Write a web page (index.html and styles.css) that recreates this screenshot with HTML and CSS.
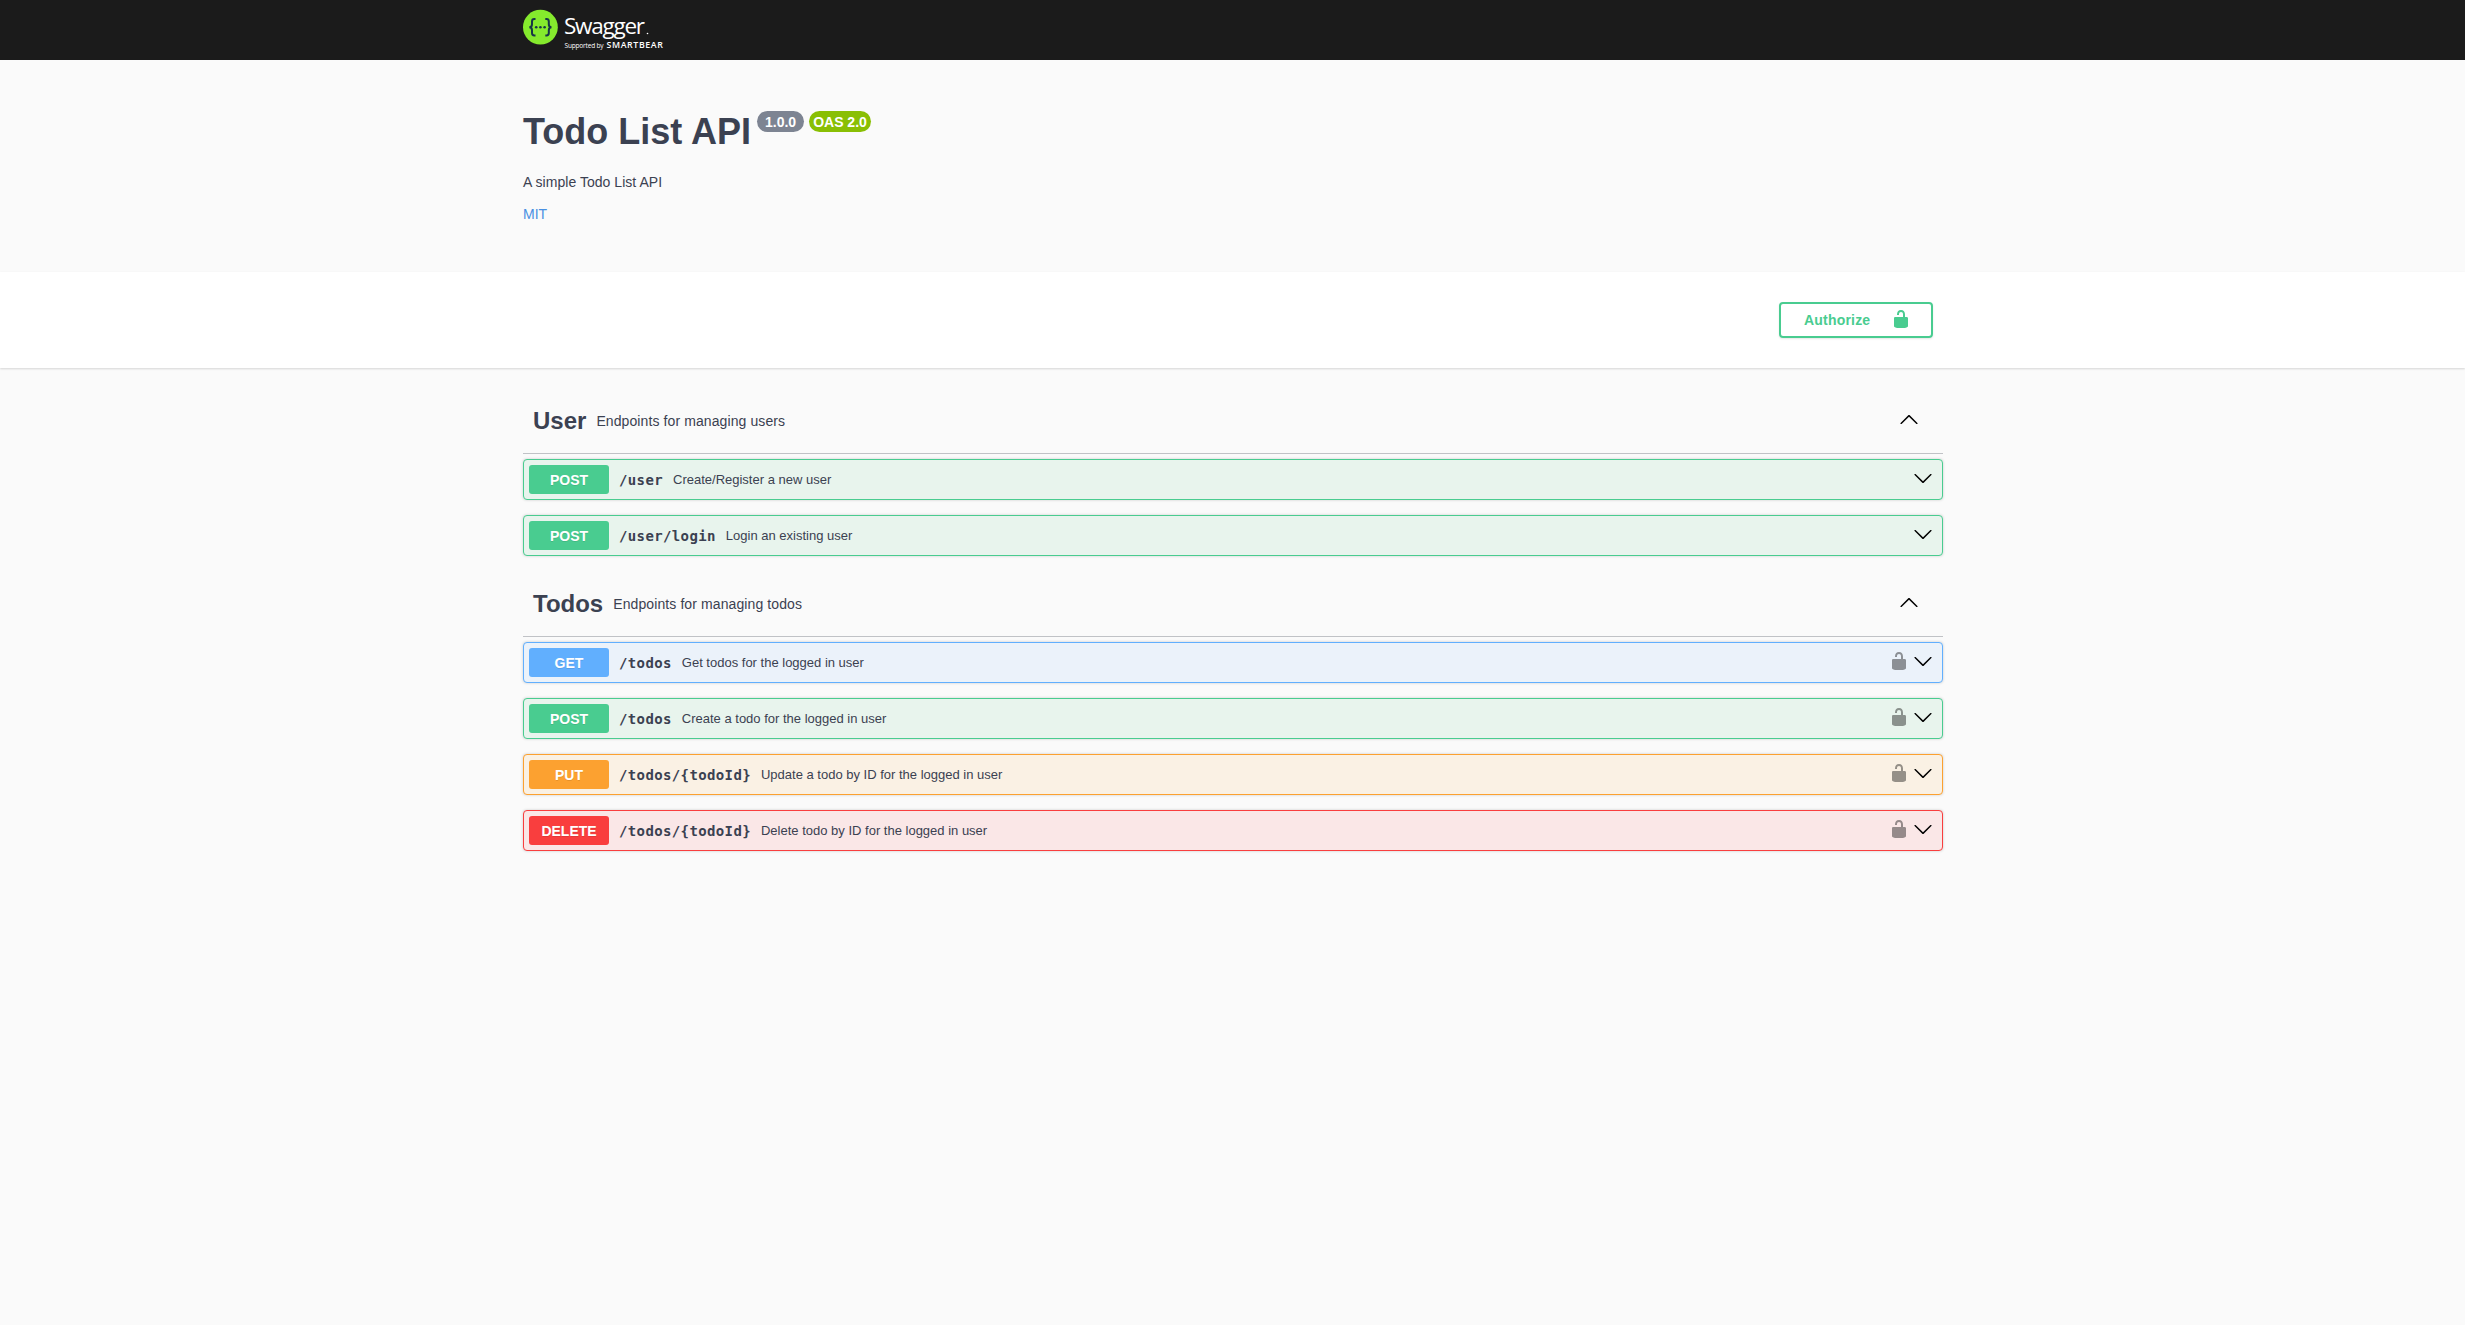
FILE: index.html
```html
<!DOCTYPE html>
<html lang="en">
<head>
<meta charset="utf-8">
<title>Todo List API</title>
<link rel="stylesheet" href="styles.css">
</head>
<body>
<svg class="symbols" aria-hidden="true">
  <symbol id="arrow-down" viewBox="0 0 20 20"><path d="M17.418 6.109c.272-.268.709-.268.979 0s.271.701 0 .969l-7.908 7.83c-.27.268-.707.268-.979 0l-7.908-7.83c-.27-.268-.271-.701 0-.969.271-.268.709-.268.979 0L10 13.25l7.418-7.141z"/></symbol>
  <symbol id="arrow-up" viewBox="0 0 20 20"><path d="M17.418 14.908c.272.268.709.268.979 0s.271-.701 0-.969l-7.908-7.83c-.27-.268-.707-.268-.979 0l-7.908 7.83c-.27.268-.271.701 0 .969.271.268.709.268.979 0L10 7.767l7.418 7.141z"/></symbol>
  <symbol id="unlocked" viewBox="0 0 20 20"><path d="M15.8 8H14V5.6C14 2.703 12.665 1 10 1 7.334 1 6 2.703 6 5.6V6h2v-.801C8 3.754 8.797 3 10 3c1.203 0 2 .754 2 2.199V8H4c-.553 0-1 .646-1 1.199V17c0 .549.428 1.139.951 1.307l1.197.387C5.672 18.861 6.55 19 7.1 19h5.8c.549 0 1.428-.139 1.951-.307l1.196-.387c.524-.167.953-.757.953-1.306V9.199C17 8.646 16.352 8 15.8 8z"/></symbol>
</svg>

<header class="topbar">
  <div class="wrapper">
    <svg class="logo" width="150" height="60" viewBox="0 0 150 60">
      <circle cx="17.4" cy="27.2" r="17.4" fill="#85ea2d"/>
      <g fill="none" stroke="#173647" stroke-width="2">
        <path d="M12.500 19h-1.200q-2.300 0-2.300 2.400v2.800q0 3-2.700 3q2.700 0 2.700 3V33q0 2.400 2.300 2.400h1.200"/>
        <path d="M22.300 19h1.200q2.300 0 2.300 2.400v2.800q0 3 2.700 3q-2.700 0-2.700 3V33q0 2.400-2.300 2.400h-1.200"/>
      </g>
      <g fill="#173647"><circle cx="13.200" cy="27.200" r="1.300"/><circle cx="17.400" cy="27.200" r="1.300"/><circle cx="21.600" cy="27.200" r="1.300"/></g>
      <text class="logo-name" x="41" y="34" textLength="81">Swagger</text>
      <circle cx="124.500" cy="33.500" r=".8" fill="#fff"/>
      <text class="logo-by" x="41.500" y="48" textLength="39">Supported by</text>
      <text class="logo-owner" x="83.500" y="48" textLength="57" lengthAdjust="spacingAndGlyphs">SMARTBEAR</text>
    </svg>
  </div>
</header>

<section class="info">
  <div class="wrapper">
    <h1 class="title"><span class="title-text">Todo List API</span><span class="badge">1.0.0</span><span class="badge badge-oas">OAS 2.0</span></h1>
    <p class="description">A simple Todo List API</p>
    <a class="license">MIT</a>
  </div>
</section>

<section class="schemes">
  <div class="wrapper schemes-inner">
    <button class="authorize"><span>Authorize</span><svg class="icon"><use href="#unlocked"/></svg></button>
  </div>
</section>

<main class="wrapper tags">
  <section class="tag">
    <h2 class="tag-head"><span class="tag-name">User</span><small class="tag-desc">Endpoints for managing users</small><svg class="icon tag-arrow"><use href="#arrow-up"/></svg></h2>
    <div class="operations">
      <div class="op post"><span class="method">POST</span><span class="path">/user</span><span class="summary">Create/Register a new user</span><svg class="icon"><use href="#arrow-down"/></svg></div>
      <div class="op post"><span class="method">POST</span><span class="path">/user/login</span><span class="summary">Login an existing user</span><svg class="icon"><use href="#arrow-down"/></svg></div>
    </div>
  </section>
  <section class="tag">
    <h2 class="tag-head"><span class="tag-name">Todos</span><small class="tag-desc">Endpoints for managing todos</small><svg class="icon tag-arrow"><use href="#arrow-up"/></svg></h2>
    <div class="operations">
      <div class="op get"><span class="method">GET</span><span class="path">/todos</span><span class="summary">Get todos for the logged in user</span><svg class="icon lock"><use href="#unlocked"/></svg><svg class="icon"><use href="#arrow-down"/></svg></div>
      <div class="op post"><span class="method">POST</span><span class="path">/todos</span><span class="summary">Create a todo for the logged in user</span><svg class="icon lock"><use href="#unlocked"/></svg><svg class="icon"><use href="#arrow-down"/></svg></div>
      <div class="op put"><span class="method">PUT</span><span class="path">/todos/{todoId}</span><span class="summary">Update a todo by ID for the logged in user</span><svg class="icon lock"><use href="#unlocked"/></svg><svg class="icon"><use href="#arrow-down"/></svg></div>
      <div class="op delete"><span class="method">DELETE</span><span class="path">/todos/{todoId}</span><span class="summary">Delete todo by ID for the logged in user</span><svg class="icon lock"><use href="#unlocked"/></svg><svg class="icon"><use href="#arrow-down"/></svg></div>
    </div>
  </section>
</main>
</body>
</html>
```
FILE: styles.css
```css
* { box-sizing: border-box; }

body {
  margin: 0;
  min-height: 100vh;
  background: #fafafa;
  color: #3b4151;
  font-family: "Liberation Sans", Arial, sans-serif;
  font-size: 14px;
}

.symbols { display: none; }
.wrapper { width: 1421px; margin: 0 auto; padding-left: 1px; }
.icon { display: block; flex: none; width: 20px; height: 20px; }

.topbar { height: 60px; background: #1b1b1b; }
.logo { display: block; }
.logo text { fill: #fff; font-family: "Open Sans", sans-serif; }
.logo .logo-name { font-size: 22.5px; }
.logo .logo-by { font-size: 6.5px; }
.logo .logo-owner { font-size: 8.5px; font-weight: 600; letter-spacing: .6px; }

.info { height: 212px; padding-top: 51px; }
.title {
  display: flex;
  align-items: flex-start;
  gap: 5px;
  margin: 0;
  font-size: 36px;
  line-height: 42px;
}
.title-text { padding-right: 1px; }
.badge {
  height: 21px;
  padding: 0 8px;
  border-radius: 11px;
  background: #7d8492;
  color: #fff;
  font-size: 14px;
  line-height: 22px;
}
.badge-oas { padding: 0 4px; background: #89bf04; }
.description { margin: 21px 0 0; line-height: 16px; letter-spacing: .04px; }
.license { display: block; margin-top: 16px; color: #4990e2; line-height: 16px; }

.schemes {
  height: 96px;
  background: #fff;
  box-shadow: 0 1px 2px rgba(0, 0, 0, .15);
}
.schemes-inner { display: flex; justify-content: flex-end; padding: 30px 10px 0 1px; }
.authorize {
  display: flex;
  align-items: center;
  justify-content: space-between;
  width: 154px;
  height: 36px;
  padding: 0 20px 2px 23px;
  border: 2px solid #49cc90;
  border-radius: 4px;
  background: transparent;
  box-shadow: 0 1px 2px rgba(0, 0, 0, .1);
  color: #49cc90;
  font: 700 14px "Liberation Sans", Arial, sans-serif;
  letter-spacing: .2px;
}
.authorize span { padding-top: 2px; }
.authorize .icon { fill: #49cc90; }

.tags { display: flex; flex-direction: column; gap: 13px; padding-top: 18px; }
.tag-head {
  display: flex;
  align-items: center;
  height: 68px;
  margin: 0 0 5px;
  padding: 0 24px 0 10px;
  border-bottom: 1px solid rgba(59, 65, 81, .3);
}
.tag-name { padding-top: 2px; font-size: 24px; line-height: 28px; }
.tag-desc {
  flex: 1;
  padding: 3px 10px 0;
  font-size: 14px;
  font-weight: 400;
  letter-spacing: .1px;
}
.tag-arrow { margin-bottom: 2px; }

.operations { display: flex; flex-direction: column; gap: 15px; }
.op {
  display: flex;
  align-items: center;
  height: 41px;
  padding: 0 9px 0 5px;
  border: 1px solid;
  border-radius: 4px;
  box-shadow: 0 0 3px rgba(0, 0, 0, .19);
}
.op .icon { margin-bottom: 3px; }
.op .lock { margin-right: 4px; opacity: .4; }
.method {
  width: 80px;
  height: 29px;
  border-radius: 3px;
  color: #fff;
  font-weight: 700;
  line-height: 30px;
  text-align: center;
  text-shadow: 0 1px 0 rgba(0, 0, 0, .1);
}
.path {
  padding: 1px 10px 0;
  font: 700 14px "DejaVu Sans Mono", monospace;
  letter-spacing: .37px;
}
.summary { flex: 1; font-size: 13px; }

.post { border-color: #49cc90; background: #e8f4ed; }
.post .method { background: #49cc90; }
.get { border-color: #61affe; background: #ebf2fa; }
.get .method { background: #61affe; }
.put { border-color: #fca130; background: #faf1e4; }
.put .method { background: #fca130; }
.delete { border-color: #f93e3e; background: #fae7e7; }
.delete .method { background: #f93e3e; }
```
